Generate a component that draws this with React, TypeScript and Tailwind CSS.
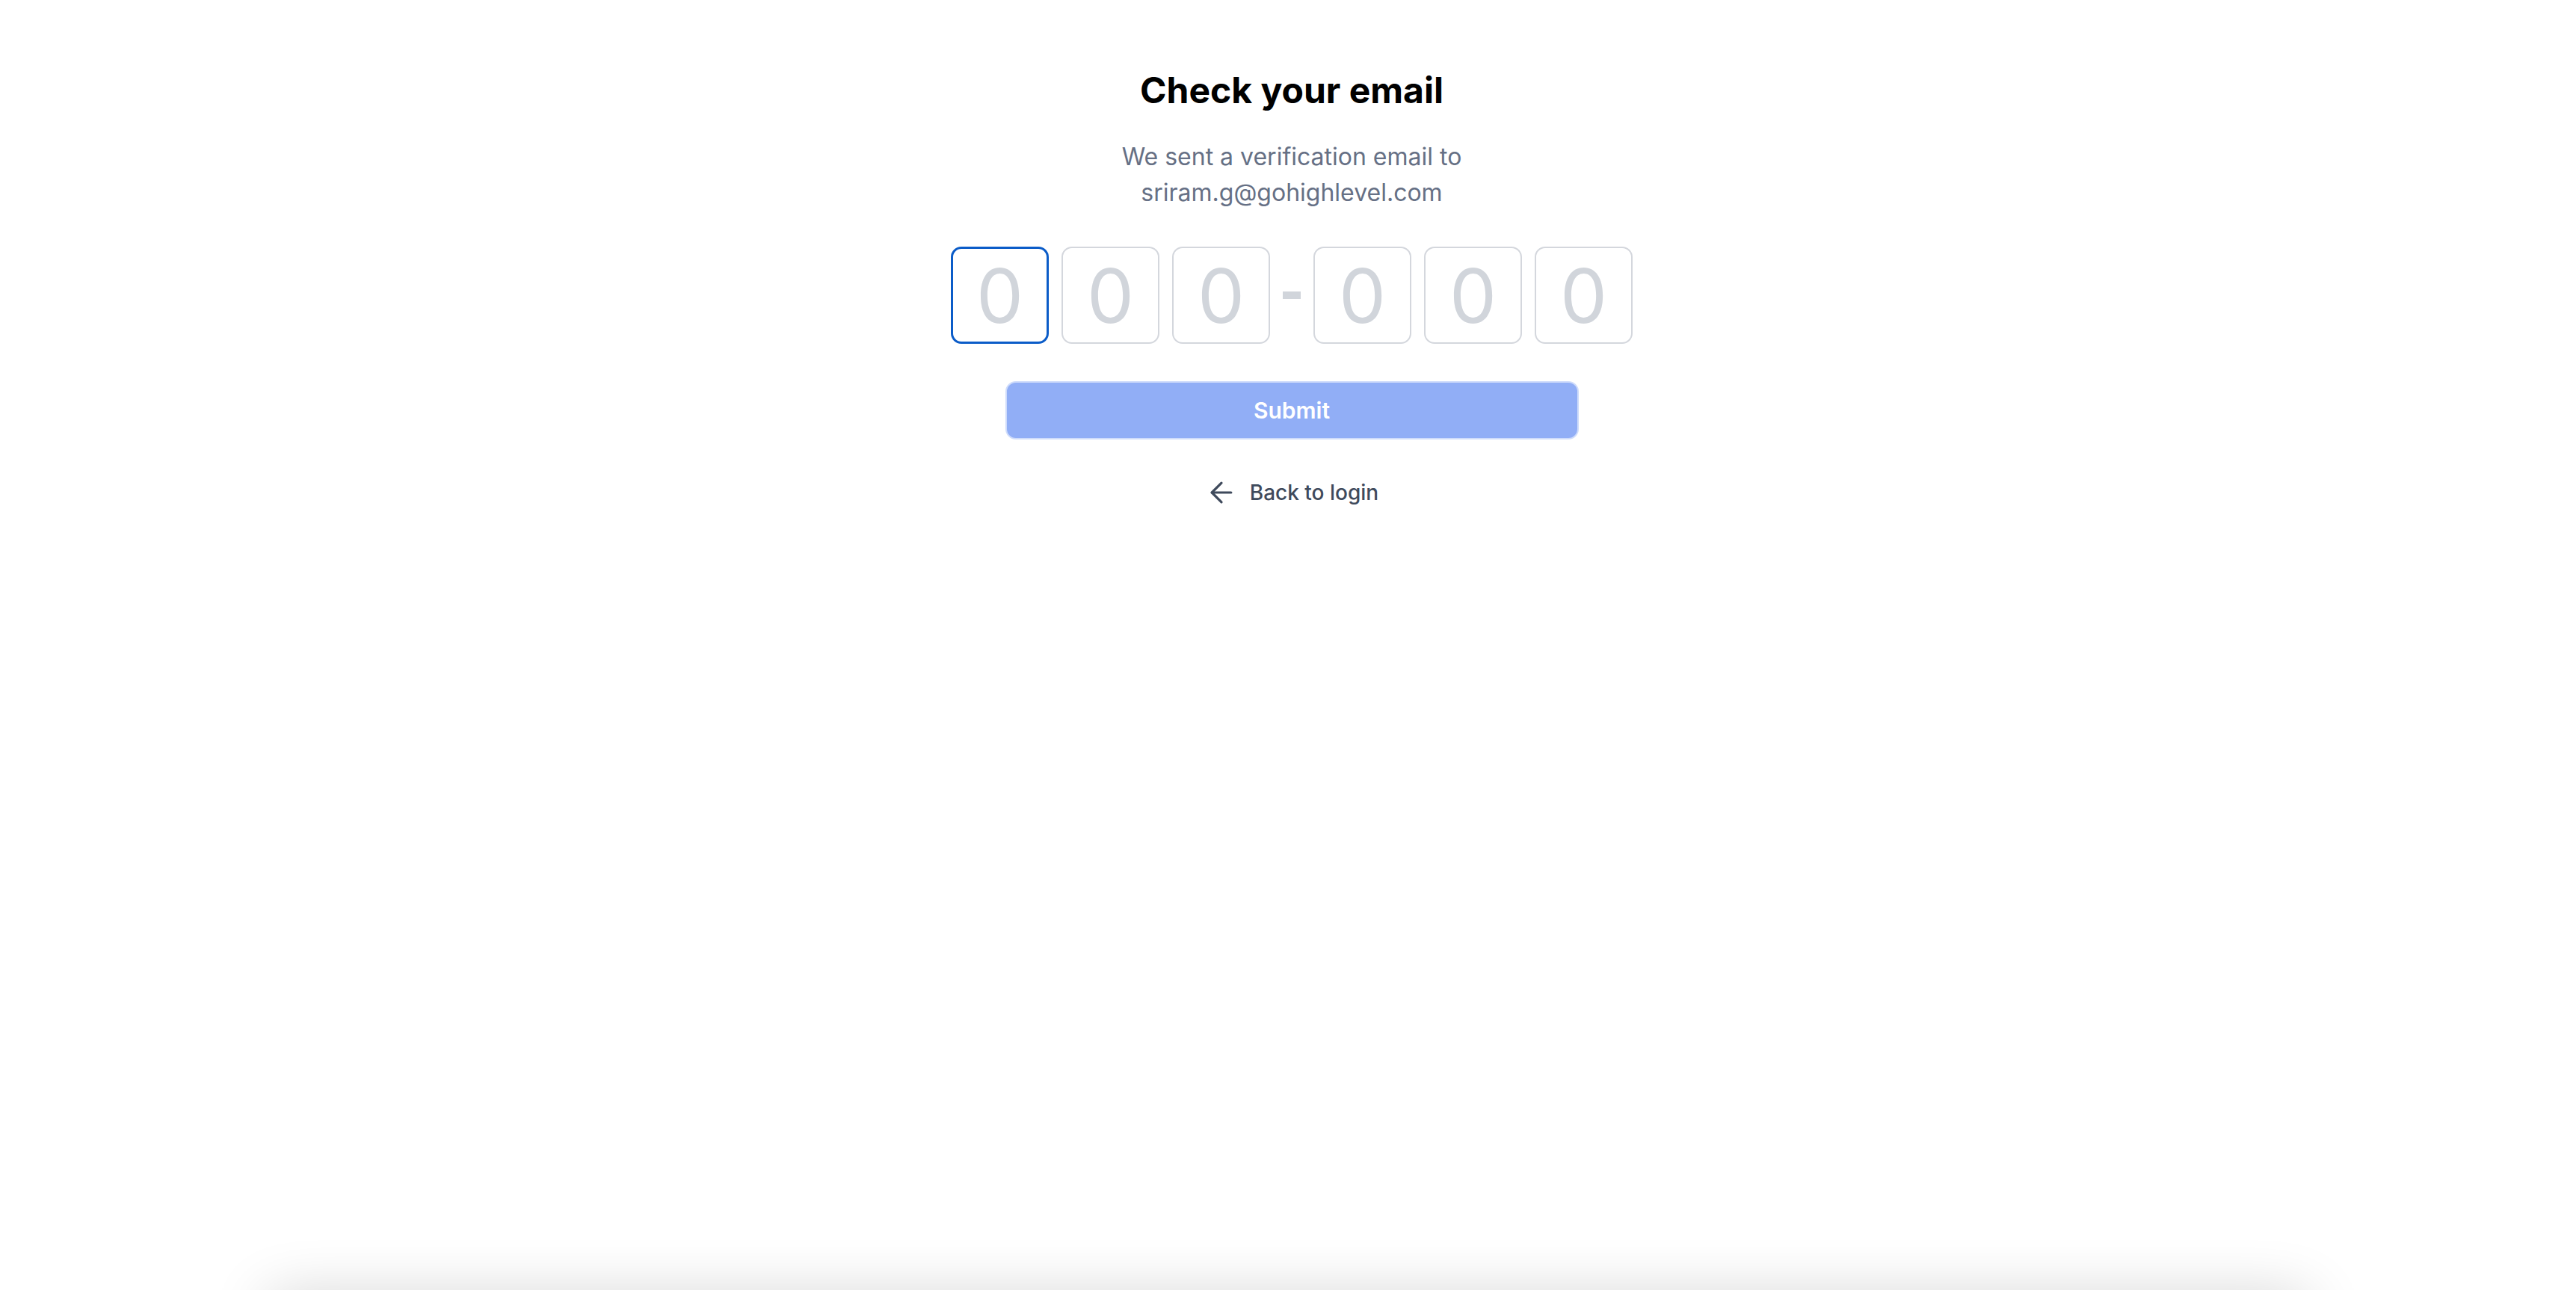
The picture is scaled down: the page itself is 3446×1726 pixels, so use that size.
import React from "react";
import { ArrowLeft } from "lucide-react";

const OtpBox: React.FC<{ active?: boolean }> = ({ active }) => (
  <input
    type="text"
    inputMode="numeric"
    maxLength={1}
    placeholder="0"
    className={`w-[131px] h-[130px] rounded-[14px] bg-white text-center text-[100px] leading-none text-[#9ca3af] placeholder:text-[#d1d5db] outline-none ${
      active ? "border-[3px] border-[#0b5cc8]" : "border-2 border-[#d4d7dd]"
    }`}
  />
);

const App: React.FC = () => {
  return (
    <div className="h-screen flex flex-col overflow-hidden bg-white font-['Inter',sans-serif]">
      <main className="flex-1 flex flex-col items-center pt-[91px] pl-[10px]">
        {/* --- Heading --- */}
        <h1 className="text-[48px] leading-[60px] font-bold text-black">
          Check your email
        </h1>
        <p className="mt-[35px] text-[32px] leading-[48px] text-[#667085] text-center">
          We sent a verification email to
          <br />
          sriram.g@gohighlevel.com
        </p>

        {/* --- Code inputs --- */}
        <div className="mt-[48px] flex items-center gap-[17px]">
          <OtpBox active />
          <OtpBox />
          <OtpBox />
          <div className="w-[24px] h-[10px] bg-[#d1d5db]"></div>
          <OtpBox />
          <OtpBox />
          <OtpBox />
        </div>

        {/* --- Submit --- */}
        <button
          disabled
          className="mt-[50px] w-[767px] h-[78px] rounded-[14px] bg-[#91aef6] border-2 border-[#cfdcfb] text-white text-[30px] font-semibold"
        >
          Submit
        </button>

        {/* --- Back link --- */}
        <a
          href="#"
          className="mt-[51px] h-[40px] flex items-center gap-[16px] text-[28px] font-medium text-[#3f4a5c]"
        >
          <ArrowLeft size={44} strokeWidth={1.75} />
          Back to login
        </a>
      </main>

      {/* shadow of the card below the fold */}
      <div className="h-0 shrink-0 mx-[390px] translate-y-[40px] shadow-[0_0_80px_30px_rgba(0,0,0,0.2)]"></div>
    </div>
  );
};

export default App;
